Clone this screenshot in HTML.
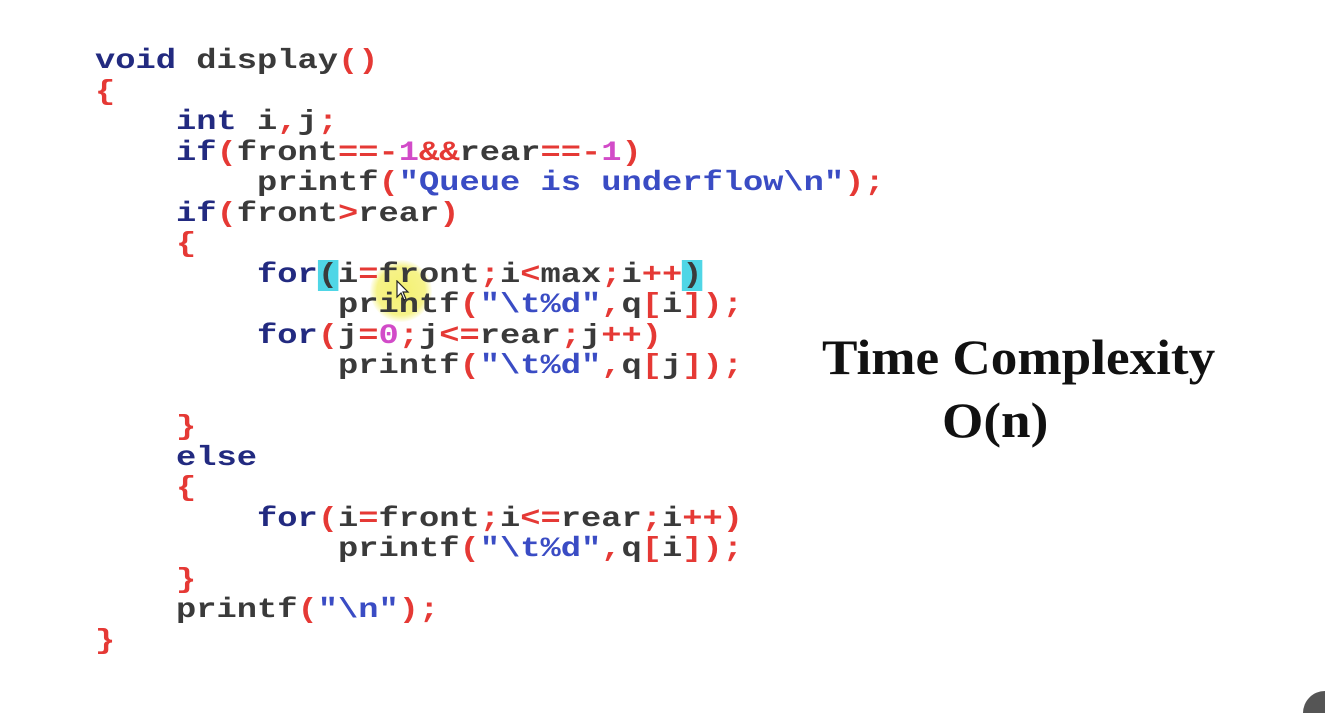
<!DOCTYPE html>
<html><head><meta charset="utf-8"><style>
html,body{margin:0;padding:0;background:#fff;width:1325px;height:713px;overflow:hidden;position:relative}
.code{position:absolute;left:95px;top:47px;font-family:"Liberation Mono",monospace;font-weight:bold;font-size:28px;line-height:30.5px;white-space:pre;color:#3a3a3a;transform:scaleX(1.205);transform-origin:0 0}
.k{color:#222a80}.r{color:#e53935}.m{color:#d24bc8}.s{color:#3a4cc4}
.hl{background:#4fd6e6}
.t{position:absolute;font-family:"Liberation Serif",serif;font-weight:bold;font-size:50px;color:#111;white-space:nowrap;transform:scaleX(1.063);transform-origin:0 0}
</style></head><body>
<div style="position:absolute;left:370px;top:260px;width:62px;height:62px;border-radius:50%;background:radial-gradient(circle,#f4f070 0%,#f6f38a 55%,rgba(255,255,255,0) 72%)"></div>
<div class="code"><span class="k">void</span> display<span class="r">()</span>
<span class="r">{</span>
    <span class="k">int</span> i<span class="r">,</span>j<span class="r">;</span>
    <span class="k">if</span><span class="r">(</span>front<span class="r">==-</span><span class="m">1</span><span class="r">&amp;&amp;</span>rear<span class="r">==-</span><span class="m">1</span><span class="r">)</span>
        printf<span class="r">(</span><span class="s">"Queue is underflow\n"</span><span class="r">);</span>
    <span class="k">if</span><span class="r">(</span>front<span class="r">&gt;</span>rear<span class="r">)</span>
    <span class="r">{</span>
        <span class="k">for</span><span class="hl">(</span>i<span class="r">=</span>front<span class="r">;</span>i<span class="r">&lt;</span>max<span class="r">;</span>i<span class="r">++</span><span class="hl">)</span>
            printf<span class="r">(</span><span class="s">"\t%d"</span><span class="r">,</span>q<span class="r">[</span>i<span class="r">]);</span>
        <span class="k">for</span><span class="r">(</span>j<span class="r">=</span><span class="m">0</span><span class="r">;</span>j<span class="r">&lt;=</span>rear<span class="r">;</span>j<span class="r">++)</span>
            printf<span class="r">(</span><span class="s">"\t%d"</span><span class="r">,</span>q<span class="r">[</span>j<span class="r">]);</span>

    <span class="r">}</span>
    <span class="k">else</span>
    <span class="r">{</span>
        <span class="k">for</span><span class="r">(</span>i<span class="r">=</span>front<span class="r">;</span>i<span class="r">&lt;=</span>rear<span class="r">;</span>i<span class="r">++)</span>
            printf<span class="r">(</span><span class="s">"\t%d"</span><span class="r">,</span>q<span class="r">[</span>i<span class="r">]);</span>
    <span class="r">}</span>
    printf<span class="r">(</span><span class="s">"\n"</span><span class="r">);</span>
<span class="r">}</span></div>
<svg style="position:absolute;left:396px;top:280px" width="16" height="22" viewBox="0 0 16 22"><path d="M1 1 L1 17 L5 13 L8 20 L10 19 L7 12 L12 12 Z" fill="#fff" stroke="#222" stroke-width="1.2"/></svg>
<div class="t" style="left:822px;top:328px">Time Complexity</div>
<div class="t" style="left:942px;top:391px">O(n)</div>
<div style="position:absolute;left:1303px;top:691px;width:44px;height:44px;border-radius:50%;background:#555"></div>
</body></html>
